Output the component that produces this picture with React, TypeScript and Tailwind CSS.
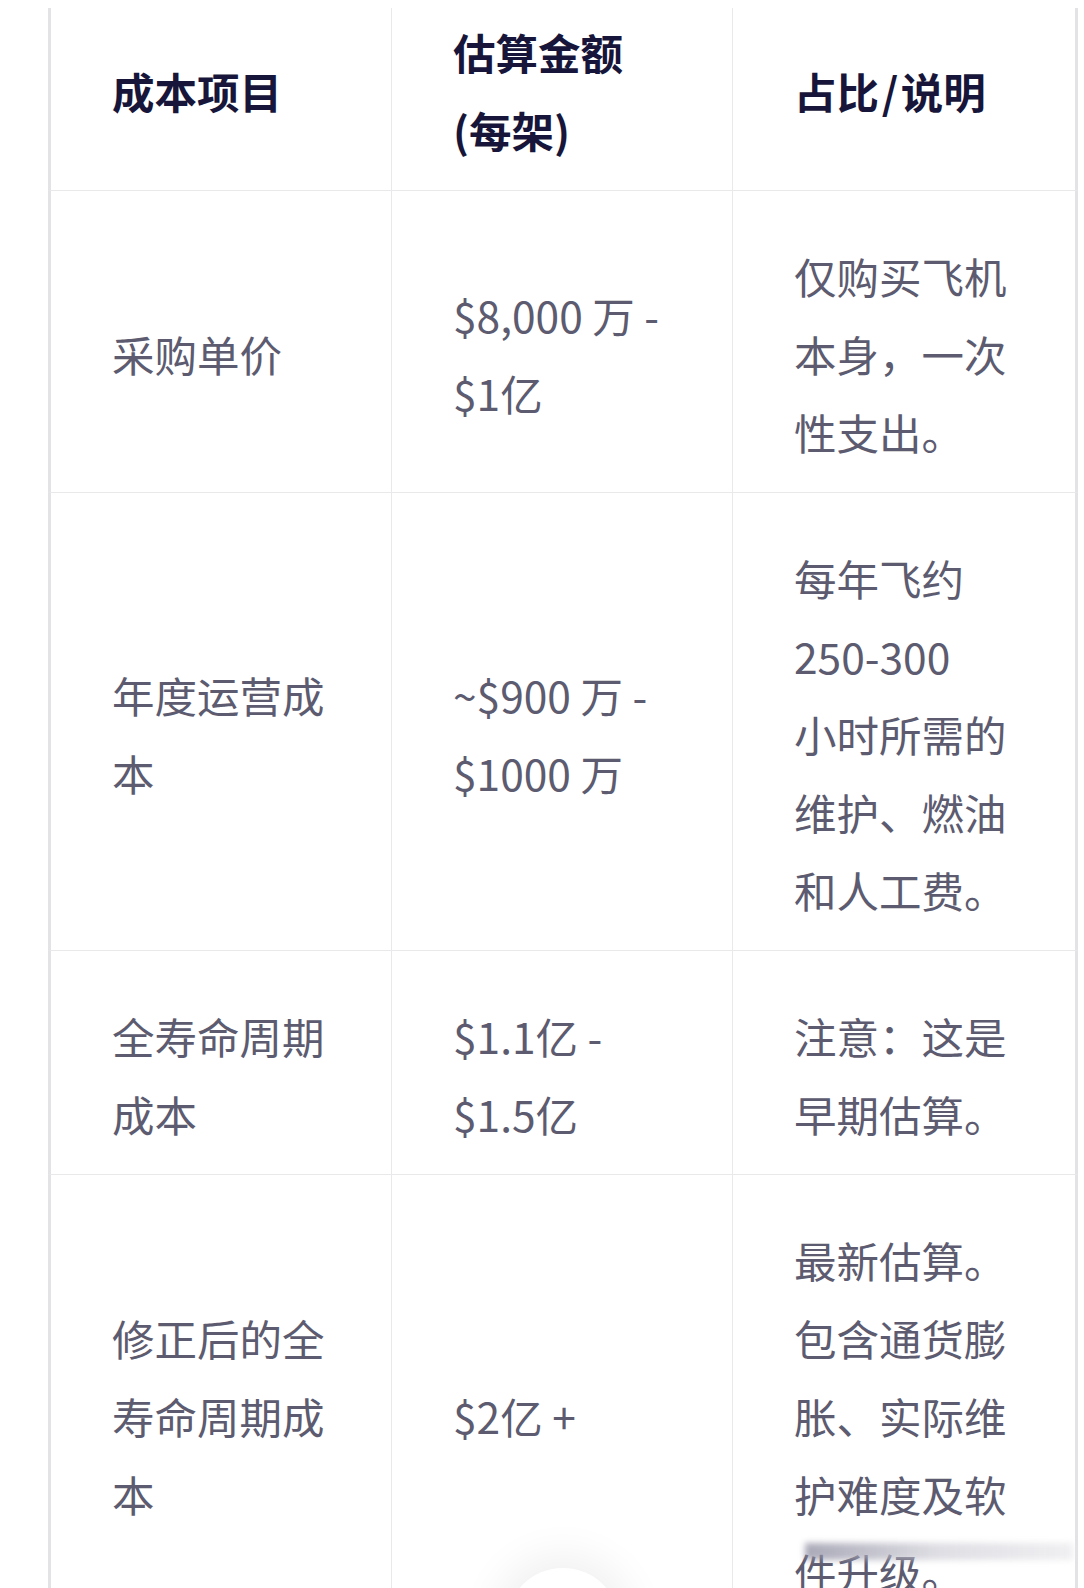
import React from "react";

type Row = {
  item: string[];
  amount: string[];
  note: string[];
};

const rows: Row[] = [
  { item: ["采购单价"], amount: ["$8,000 万 -", "$1亿"], note: ["仅购买飞机", "本身，一次", "性支出。"] },
  {
    item: ["年度运营成", "本"],
    amount: ["~$900 万 -", "$1000 万"],
    note: ["每年飞约", "250-300", "小时所需的", "维护、燃油", "和人工费。"],
  },
  { item: ["全寿命周期", "成本"], amount: ["$1.1亿 -", "$1.5亿"], note: ["注意：这是", "早期估算。"] },
  {
    item: ["修正后的全", "寿命周期成", "本"],
    amount: ["$2亿 +"],
    note: ["最新估算。", "包含通货膨", "胀、实际维", "护难度及软", "件升级。"],
  },
];

const Lines = ({ lines }: { lines: string[] }) => (
  <>
    {lines.map((l, i) => (
      <span key={i} className="block whitespace-nowrap">
        {l}
      </span>
    ))}
  </>
);

// 单元格基础样式
const cell = "flex flex-col justify-center border-b border-r border-[#e9e9ec] px-[61px] pt-[46px] pb-[21px]";
const first = `${cell} border-l-[3px] border-l-[#e3e3e6]`;
const last = `${cell} border-r-[3px] border-r-[#e3e3e6]`;

export default function App() {
  return (
    <div
      className="relative h-[1588px] w-[1084px] overflow-hidden bg-white"
      style={{ fontFamily: '"Noto Sans CJK SC", "Noto Sans", sans-serif' }}
    >
      <div className="pt-[8px] pl-[48px]">
        <div className="h-[1580px] overflow-hidden">
          <div className="-mt-[41px] grid grid-cols-[344px_341px_345px] text-[42.5px] leading-[78px]">
            <div className={`${first} font-bold text-[#17163a]`}>成本项目</div>
            <div className={`${cell} font-bold text-[#17163a]`}>
              <Lines lines={["估算金额", "(每架)"]} />
            </div>
            <div className={`${last} font-bold text-[#17163a]`}>占比{"\u200A"}/{"\u200A"}说明</div>

            {rows.map((r, idx) => (
              <React.Fragment key={idx}>
                <div className={`${first} text-[#5c5b70]`}>
                  <Lines lines={r.item} />
                </div>
                <div className={`${cell} text-[#5c5b70]`}>
                  <Lines lines={r.amount} />
                </div>
                <div className={`${last} text-[#5c5b70]`}>
                  <Lines lines={r.note} />
                </div>
              </React.Fragment>
            ))}
          </div>
        </div>
      </div>

      {/* 最后一行上的模糊条 */}
      <div className="absolute left-[805px] top-[1543px] h-[17px] w-[268px] bg-gradient-to-r from-[#8d8ca0]/75 via-[#d0d0d8]/70 to-[#e6e6ea]/60 blur-[3px]" />
      {/* 底部浮动按钮（被截断） */}
      <div className="absolute left-[506px] top-[1568px] h-[114px] w-[114px] rounded-full bg-white shadow-[0_0_40px_14px_rgba(0,0,0,0.06)]" />
    </div>
  );
}
